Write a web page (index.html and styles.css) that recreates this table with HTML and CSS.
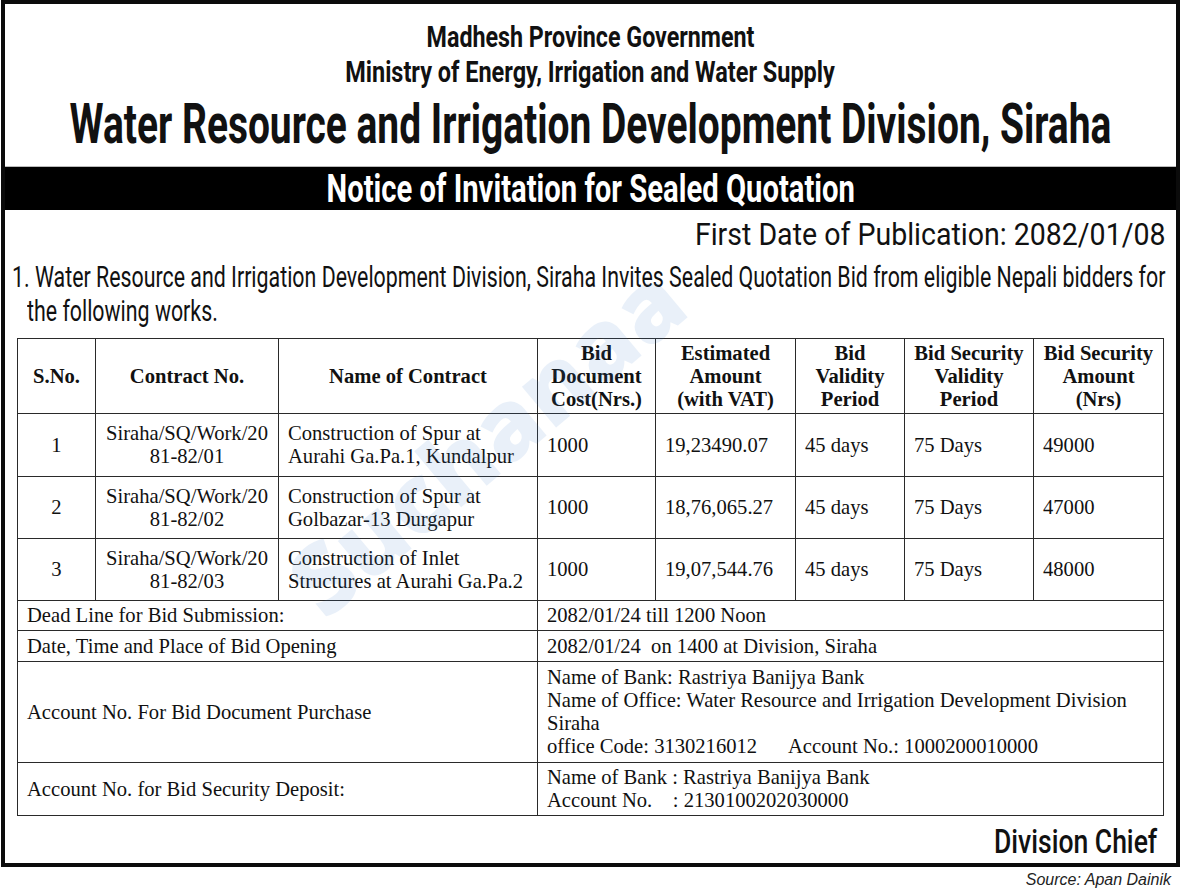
FILE: index.html
```html
<!DOCTYPE html>
<html lang="en">
<head>
<meta charset="utf-8">
<title>Notice of Invitation for Sealed Quotation</title>
<link rel="stylesheet" href="styles.css">
</head>
<body>
<div class="page">
  <div class="frame">
    <header class="head">
      <div class="line"><span class="h1 cond">Madhesh Province Government</span></div>
      <div class="line"><span class="h2 cond">Ministry of Energy, Irrigation and Water Supply</span></div>
      <div class="line title-line"><span class="title cond">Water Resource and Irrigation Development Division, Siraha</span></div>
    </header>
    <div class="bar"><span class="bar-text cond">Notice of Invitation for Sealed Quotation</span></div>
    <div class="pub"><span class="pub-text cond">First Date of Publication: 2082/01/08</span></div>
    <div class="para">
      <span class="para-line cond">1. Water Resource and Irrigation Development Division, Siraha Invites Sealed Quotation Bid from eligible Nepali bidders for</span>
      <span class="para-line para-second cond">the following works.</span>
    </div>
    <table class="grid">
      <colgroup>
        <col class="c1"><col class="c2"><col class="c3"><col class="c4"><col class="c5"><col class="c6"><col class="c7"><col class="c8">
      </colgroup>
      <thead>
        <tr class="r-head">
          <th>S.No.</th>
          <th>Contract No.</th>
          <th>Name of Contract</th>
          <th>Bid<br>Document<br>Cost(Nrs.)</th>
          <th>Estimated<br>Amount<br>(with VAT)</th>
          <th>Bid<br>Validity<br>Period</th>
          <th>Bid Security<br>Validity<br>Period</th>
          <th>Bid Security<br>Amount<br>(Nrs)</th>
        </tr>
      </thead>
      <tbody>
        <tr class="r-data r-first">
          <td class="ctr">1</td>
          <td class="ctr">Siraha/SQ/Work/20<br>81-82/01</td>
          <td>Construction of Spur at<br>Aurahi Ga.Pa.1, Kundalpur</td>
          <td>1000</td>
          <td>19,23490.07</td>
          <td>45 days</td>
          <td>75 Days</td>
          <td>49000</td>
        </tr>
        <tr class="r-data">
          <td class="ctr">2</td>
          <td class="ctr">Siraha/SQ/Work/20<br>81-82/02</td>
          <td>Construction of Spur at<br>Golbazar-13 Durgapur</td>
          <td>1000</td>
          <td>18,76,065.27</td>
          <td>45 days</td>
          <td>75 Days</td>
          <td>47000</td>
        </tr>
        <tr class="r-data">
          <td class="ctr">3</td>
          <td class="ctr">Siraha/SQ/Work/20<br>81-82/03</td>
          <td>Construction of Inlet<br>Structures at Aurahi Ga.Pa.2</td>
          <td>1000</td>
          <td>19,07,544.76</td>
          <td>45 days</td>
          <td>75 Days</td>
          <td>48000</td>
        </tr>
        <tr class="r-one">
          <td colspan="3">Dead Line for Bid Submission:</td>
          <td colspan="5">2082/01/24 till 1200 Noon</td>
        </tr>
        <tr class="r-one r-one-b">
          <td colspan="3">Date, Time and Place of Bid Opening</td>
          <td colspan="5">2082/01/24&nbsp; on 1400 at Division, Siraha</td>
        </tr>
        <tr class="r-four">
          <td colspan="3">Account No. For Bid Document Purchase</td>
          <td colspan="5">Name of Bank: Rastriya Banijya Bank<br>Name of Office: Water Resource and Irrigation Development Division<br>Siraha<br>office Code: 3130216012 &nbsp;&nbsp;&nbsp;&nbsp;&nbsp;Account No.: 1000200010000</td>
        </tr>
        <tr class="r-two">
          <td colspan="3">Account No. for Bid Security Deposit:</td>
          <td colspan="5">Name of Bank : Rastriya Banijya Bank<br>Account No. &nbsp;&nbsp;&nbsp;: 2130100202030000</td>
        </tr>
      </tbody>
    </table>
    <div class="sign"><span class="sign-text cond">Division Chief</span></div>
    <div class="watermark" aria-hidden="true">Suchanaa</div>
  </div>
  <div class="source">Source: Apan Dainik</div>
</div>
</body>
</html>
```

FILE: styles.css
```css
html, body {
  margin: 0;
  padding: 0;
  background: #ffffff;
}

body {
  width: 1181px;
  height: 890px;
  overflow: hidden;
  color: #111;
  font-family: Roboto, "Liberation Sans", sans-serif;
}

.page {
  padding-left: 1px;
}

.frame {
  position: relative;
  width: 1171px;
  border: 4px solid #0b0b0b;
  overflow: hidden;
  background: #fff;
}

.cond {
  display: inline-block;
  white-space: nowrap;
}

/* ---------- header ---------- */
.head {
  padding: 15px 0 9px;
  text-align: center;
  border-bottom: 1px solid #bbb;
}

.line {
  display: flex;
  justify-content: center;
}

.h1 {
  font-weight: 700;
  font-size: 30px;
  line-height: 35px;
  transform: scaleX(0.775);
}

.h2 {
  font-weight: 700;
  font-size: 30px;
  line-height: 35px;
  transform: scaleX(0.782);
}

.title-line {
  margin-top: 3px;
}

.title {
  font-weight: 700;
  font-size: 56px;
  line-height: 65px;
  transform: scaleX(0.695);
}

/* ---------- black band ---------- */
.bar {
  height: 43px;
  background: #000;
  display: flex;
  justify-content: center;
  align-items: center;
}

.bar-text {
  color: #fff;
  font-weight: 700;
  font-size: 39px;
  line-height: 43px;
  padding-top: 2px;
  transform: scaleX(0.749);
}

/* ---------- publication date ---------- */
.pub {
  display: flex;
  justify-content: flex-end;
  padding: 8px 11px 0 0;
}

.pub-text {
  font-size: 31px;
  line-height: 34px;
  transform: scaleX(0.92);
  transform-origin: right center;
}

/* ---------- paragraph ---------- */
.para {
  display: flex;
  flex-direction: column;
  align-items: flex-start;
  padding: 8px 0 0 7px;
}

.para-line {
  font-size: 30px;
  line-height: 34px;
  transform: scaleX(0.712);
  transform-origin: left center;
}

.para-second {
  margin-left: 15px;
}

/* ---------- table ---------- */
.grid {
  margin: 10px 0 0 12px;
  width: 1146px;
  border-collapse: collapse;
  table-layout: fixed;
  font-family: "Liberation Serif", "Times New Roman", serif;
  font-size: 20.6px;
  line-height: 23px;
  color: #111;
}

.c1 { width: 78px; }
.c2 { width: 183px; }
.c3 { width: 259px; }
.c4 { width: 118px; }
.c5 { width: 140px; }
.c6 { width: 109px; }
.c7 { width: 129px; }
.c8 { width: 130px; }

.grid th,
.grid td {
  border: 1px solid #2a2a2a;
  padding: 0 2px 0 9px;
  vertical-align: middle;
  text-align: left;
}

.grid th {
  text-align: center;
  font-weight: 700;
  padding: 0 1px;
}

.grid td.ctr {
  text-align: center;
  padding: 0 2px;
}

.r-head { height: 75px; }
.r-data { height: 62px; }
.r-first { height: 63px; }
.r-one { height: 30px; }
.r-one-b { height: 31px; }
.r-four { height: 101px; }
.r-two { height: 53px; }

/* ---------- signature ---------- */
.sign {
  display: flex;
  justify-content: flex-end;
  padding: 7px 19px 4px 0;
}

.sign-text {
  font-weight: 500;
  font-size: 34px;
  line-height: 36px;
  transform: scaleX(0.78);
  transform-origin: right center;
}

/* ---------- watermark ---------- */
.watermark {
  position: absolute;
  left: 240px;
  top: 385px;
  font-family: "Open Sans", Roboto, sans-serif;
  font-weight: 800;
  font-size: 96px;
  line-height: 100px;
  color: #3d7fcf;
  opacity: 0.11;
  transform: rotate(-40deg);
  pointer-events: none;
  white-space: nowrap;
}

/* ---------- source ---------- */
.source {
  text-align: right;
  padding: 4px 10px 0 0;
  font-family: "Liberation Sans", Arial, sans-serif;
  font-style: italic;
  font-size: 16px;
  line-height: 18px;
  color: #222;
}
```
